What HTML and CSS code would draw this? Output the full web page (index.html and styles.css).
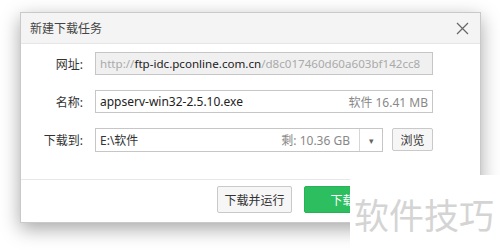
FILE: index.html
```html
<!DOCTYPE html>
<html lang="zh-CN">
<head>
    <meta charset="UTF-8">
    <meta name="viewport" content="width=device-width, initial-scale=1.0">
    <title>新建下载任务</title>
    <link rel="stylesheet" href="styles.css">
</head>
<body>
    <div class="dialog">
        <div class="titlebar">
            <span class="title">新建下载任务</span>
            <svg class="close" width="13" height="13" viewBox="0 0 13 13">
                <path d="M1 1L12 12M12 1L1 12" stroke="#666" stroke-width="1.2" fill="none"/>
            </svg>
        </div>

        <div class="body">
            <div class="row">
                <span class="label">网址:</span>
                <div class="field url">
                    <span class="dim">http://</span><span class="host">ftp-idc.pconline.com.cn</span><span class="dim">/d8c017460d60a603bf142cc8</span>
                </div>
            </div>

            <div class="row">
                <span class="label">名称:</span>
                <div class="field name">
                    <span class="value">appserv-win32-2.5.10.exe</span>
                    <span class="side">软件 16.41 MB</span>
                </div>
            </div>

            <div class="row">
                <span class="label">下载到:</span>
                <div class="pathgroup">
                    <div class="field path">
                        <span class="value">E:\软件</span>
                        <span class="side">剩: 10.36 GB</span>
                        <span class="arrow">▾</span>
                    </div>
                    <button class="btn browse">浏览</button>
                </div>
            </div>
        </div>

        <div class="footer">
            <button class="btn">下载并运行</button>
            <button class="btn primary">下载</button>
        </div>
    </div>

    <div class="watermark">软件技巧</div>
</body>
</html>
```

FILE: styles.css
```css
* {
    box-sizing: border-box;
}

body {
    margin: 0;
    padding: 12px 0 0 20px;
    background: #fff;
    font-family: "Noto Sans", "Noto Sans CJK SC", sans-serif;
    font-size: 12px;
    color: #333;
    width: 500px;
    height: 250px;
    overflow: hidden;
    position: relative;
}

.dialog {
    width: 461px;
    height: 211px;
    border: 1px solid #c9c9c9;
    background: #fff;
    box-shadow: 0 6px 18px rgba(0, 0, 0, 0.35);
    display: flex;
    flex-direction: column;
}

.titlebar {
    height: 31px;
    background: #f4f4f4;
    border-bottom: 1px solid #e6e6e6;
    display: flex;
    align-items: center;
    justify-content: space-between;
    padding: 0 11px 0 9px;
}

.title {
    font-size: 12px;
    color: #444;
}

.body {
    padding: 8px 0 0 0;
    display: flex;
    flex-direction: column;
    gap: 15px;
    height: 135px;
}

.row {
    display: flex;
    align-items: center;
    gap: 12px;
}

.label {
    width: 62px;
    text-align: right;
    font-size: 12px;
    color: #333;
}

.field {
    height: 23px;
    border: 1px solid #c6c6c6;
    background: #fff;
    display: flex;
    align-items: center;
    padding: 0 4px 0 4px;
    font-size: 12px;
    white-space: nowrap;
    overflow: hidden;
}

.url {
    width: 338px;
    background: #f0f0f0;
    color: #aaa;
    font-size: 11.6px;
}

.url .dim {
    color: #aaa;
}

.url .host {
    color: #222;
}

.name {
    width: 338px;
    justify-content: space-between;
    color: #222;
}

.side {
    color: #888;
}

.pathgroup {
    display: flex;
    gap: 9px;
}

.path {
    width: 288px;
    height: 24px;
    padding-right: 0;
}

.path .value {
    flex: 1;
    color: #333;
}

.path .side {
    padding-right: 9px;
}

.arrow {
    width: 23px;
    height: 100%;
    border-left: 1px solid #d6d6d6;
    display: flex;
    align-items: center;
    justify-content: center;
    color: #666;
    font-size: 9px;
}

.btn {
    font-family: inherit;
    font-size: 12px;
    color: #333;
    background: #f6f6f6;
    border: 1px solid #c9c9c9;
    border-radius: 2px;
    padding: 0;
}

.browse {
    width: 41px;
    height: 23px;
}

.footer {
    border-top: 1px solid #e8e8e8;
    flex: 1;
    display: flex;
    justify-content: flex-end;
    align-items: flex-start;
    gap: 12px;
    padding: 6px 99px 0 0;
}

.footer .btn {
    width: 75px;
    height: 27px;
}

.footer .primary {
    width: 77px;
    background: #2dbe60;
    border-color: #27b257;
    color: #fff;
}

.watermark {
    position: absolute;
    left: 350px;
    top: 175px;
    width: 150px;
    height: 75px;
    background: #fff;
    color: #d4d4d4;
    font-family: "Noto Sans CJK SC", sans-serif;
    font-size: 35px;
    line-height: 1;
    padding: 21px 0 0 4px;
}
```
